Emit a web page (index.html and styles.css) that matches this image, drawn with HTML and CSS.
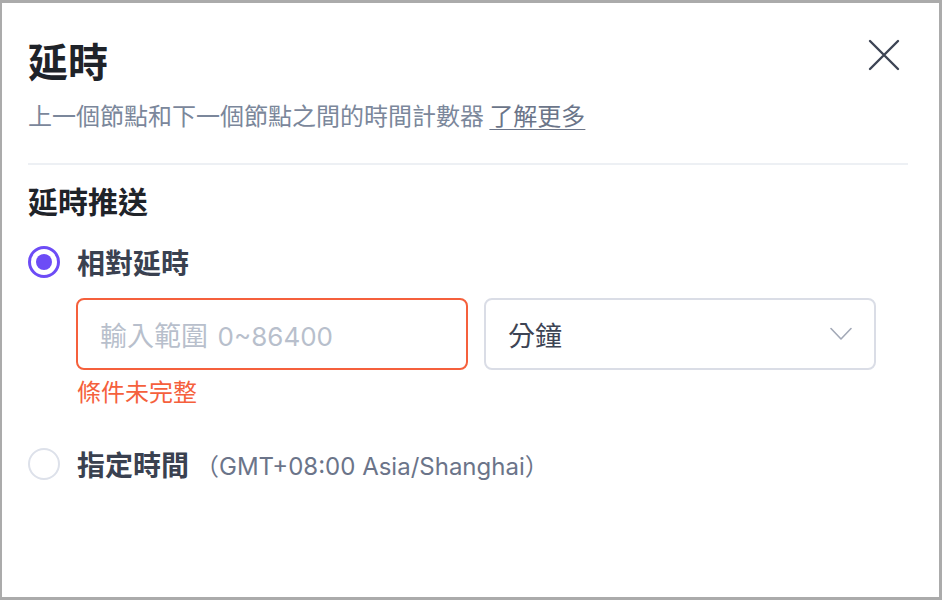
FILE: index.html
```html
<!DOCTYPE html>
<html lang="zh-Hant">
<head>
<meta charset="utf-8">
<link rel="stylesheet" href="styles.css">
</head>
<body>
<div class="dialog">
  <div class="head">
    <h1 class="title">延時</h1>
    <button class="close" aria-label="close">
      <svg width="32" height="32" viewBox="0 0 32 32"><path d="M2 2 L30 30 M30 2 L2 30" stroke="#3d4454" stroke-width="2.4" stroke-linecap="round" fill="none"/></svg>
    </button>
  </div>
  <p class="desc">上一個節點和下一個節點之間的時間計數器 <a class="link">了解更多</a></p>
  <div class="divider"></div>
  <h2 class="section">延時推送</h2>
  <div class="radio-row">
    <span class="radio checked"></span>
    <span class="label">相對延時</span>
  </div>
  <div class="fields">
    <div class="input error"><span class="placeholder">輸入範圍 <span class="num">0~86400</span></span></div>
    <div class="select">
      <span class="value">分鐘</span>
      <svg width="22" height="14" viewBox="0 0 22 14"><path d="M1 1.5 L11 12 L21 1.5" stroke="#a3a9b7" stroke-width="1.6" fill="none" stroke-linecap="round" stroke-linejoin="round"/></svg>
    </div>
  </div>
  <div class="err-msg">條件未完整</div>
  <div class="radio-row second">
    <span class="radio"></span>
    <span class="label">指定時間</span>
    <span class="tz">（GMT+08:00 Asia/Shanghai）</span>
  </div>
</div>
</body>
</html>
```

FILE: styles.css
```css
* { box-sizing: border-box; }
html, body { margin: 0; padding: 0; background: #fff; }
body {
  font-family: "Inter", "Noto Sans CJK TC", sans-serif;
}
.dialog {
  width: 942px;
  height: 600px;
  border-style: solid;
  border-color: #ababab;
  border-width: 3px 3px 3px 2px;
  padding: 33px 31px 0 26px;
  background: #fff;
}
.head {
  display: flex;
  justify-content: space-between;
  align-items: center;
}
.title {
  margin: 0;
  font-family: "Noto Sans CJK TC", sans-serif;
  font-size: 40px;
  line-height: 48px;
  font-weight: 700;
  color: #1f2329;
}
.close {
  border: 0;
  background: none;
  padding: 0;
  margin: -10px 8px 0 0;
  width: 32px;
  height: 32px;
  display: flex;
}
.desc {
  margin: 15px 0 0;
  font-family: "Noto Sans CJK TC", sans-serif;
  font-size: 24px;
  line-height: 32px;
  color: #7b879b;
}
.link {
  text-decoration: underline;
  text-underline-offset: 4px;
  text-decoration-thickness: 1px;
  color: #6b7589;
}
.divider {
  height: 2px;
  background: #edf0f4;
  margin-top: 32px;
}
.section {
  margin: 15px 0 0;
  font-family: "Noto Sans CJK TC", sans-serif;
  font-size: 30px;
  line-height: 40px;
  font-weight: 700;
  color: #1f2329;
}
.radio-row {
  display: flex;
  align-items: center;
  height: 40px;
  margin-top: 22px;
}
.radio-row.second { margin-top: 35px; }
.radio {
  width: 32px;
  height: 32px;
  border-radius: 50%;
  border: 2px solid #dde1ea;
  display: flex;
  align-items: center;
  justify-content: center;
  flex: none;
}
.radio.checked {
  border: 3px solid #6d4cf6;
}
.radio.checked::after {
  content: "";
  width: 16px;
  height: 16px;
  border-radius: 50%;
  background: #6d4cf6;
}
.label {
  margin-left: 17px;
  font-family: "Noto Sans CJK TC", sans-serif;
  font-size: 28px;
  font-weight: 700;
  color: #3a4150;
}
.tz {
  margin-left: 6px;
  font-size: 24px;
  color: #6b7489;
}
.fields {
  display: flex;
  gap: 16px;
  margin: 16px 0 0 48px;
  width: 800px;
}
.input, .select {
  flex: 1;
  height: 72px;
  border-radius: 8px;
  display: flex;
  align-items: center;
  padding: 0 22px;
}
.input.error { border: 2px solid #f5603c; }
.placeholder {
  font-size: 27px;
  color: #b8bfcc;
}
.placeholder .num {
  font-size: 26px;
  margin-left: 2px;
}
.select {
  border: 2px solid #dadde6;
  justify-content: space-between;
  padding: 0 22px 0 22px;
}
.value {
  font-size: 27px;
  color: #3d4454;
}
.err-msg {
  margin: 7px 0 0 49px;
  font-size: 24px;
  line-height: 32px;
  color: #f5603c;
}
```
